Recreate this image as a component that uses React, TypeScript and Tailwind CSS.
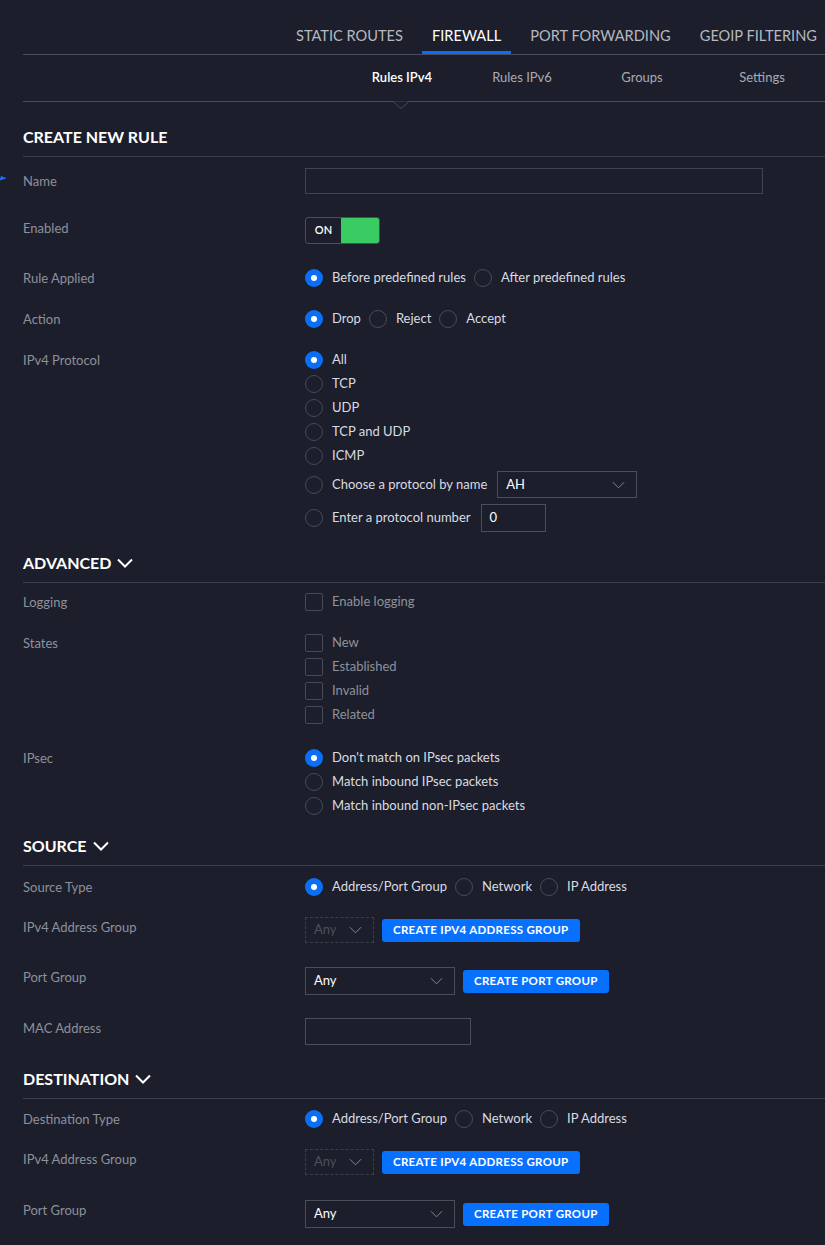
import React from "react";

const font = { fontFamily: "Lato, 'Noto Sans', sans-serif" };

function Radio({ on }: { on?: boolean }) {
  return on ? (
    <span className="w-[18px] h-[18px] shrink-0 rounded-full bg-[#0b6ff5] flex items-center justify-center">
      <span className="w-[6px] h-[6px] rounded-full bg-white" />
    </span>
  ) : (
    <span className="w-[18px] h-[18px] shrink-0 rounded-full border border-[#464a56]" />
  );
}

function Check() {
  return <span className="w-[18px] h-[18px] shrink-0 rounded-[2px] border border-[#464a56]" />;
}

function RadioItem({ on, label }: { on?: boolean; label: string }) {
  return (
    <span className="flex items-center h-[18px]">
      <Radio on={on} />
      <span className="ml-[9px] text-[13px] text-[#d9dbe0]">{label}</span>
    </span>
  );
}

function CheckItem({ label }: { label: string }) {
  return (
    <span className="flex items-center h-[18px]">
      <Check />
      <span className="ml-[9px] text-[13px] text-[#8e9199]">{label}</span>
    </span>
  );
}

function Chevron({ className, sw = 1 }: { className: string; sw?: number }) {
  return (
    <svg className={className} viewBox="0 0 16 10" fill="none">
      <path d="M1 1.5l7 7 7-7" stroke="currentColor" strokeWidth={sw} />
    </svg>
  );
}

function Select({ value, w, disabled }: { value: string; w: string; disabled?: boolean }) {
  return (
    <div
      className={
        disabled
          ? `${w} h-[26px] border border-dashed border-[#3b3f4b] flex items-center justify-between pl-[8px] pr-[10px] text-[13px] text-[#4c505b]`
          : `${w} h-[28px] border border-[#4a4e58] flex items-center justify-between pl-[8px] pr-[10px] text-[13px] text-white`
      }
    >
      <span>{value}</span>
      <Chevron className="w-[15px] h-[8px] text-[#9a9da5]" />
    </div>
  );
}

function Btn({ children }: { children: string }) {
  return (
    <button className="h-[23px] px-[11px] rounded-[3px] bg-[#0870ff] text-white text-[11.5px] font-bold tracking-[0.3px]">
      {children}
    </button>
  );
}

function Row({ label, children, lh = "leading-[18px]", className = "" }: { label: string; children: React.ReactNode; lh?: string; className?: string }) {
  return (
    <div className={`flex items-start ${className}`}>
      <div className={`w-[282px] shrink-0 text-[13px] text-[#8e9199] ${lh}`}>{label}</div>
      <div>{children}</div>
    </div>
  );
}

function Heading({ title, chevron, className }: { title: string; chevron?: boolean; className: string }) {
  return (
    <div className={`flex items-center border-b border-[#3c404c] pb-[8px] ${className}`}>
      <span className="text-[16px] leading-[22px] font-bold text-white">{title}</span>
      {chevron && <Chevron className="ml-[6px] w-[16px] h-[10px] text-white" sw={2} />}
    </div>
  );
}

function GroupRows({ last }: { last?: boolean }) {
  return (
    <>
      <Row label="IPv4 Address Group" lh="leading-[21px]" className="mt-[21px]">
        <div className="flex items-center gap-[8px]">
          <Select value="Any" w="w-[69px]" disabled />
          <Btn>CREATE IPV4 ADDRESS GROUP</Btn>
        </div>
      </Row>
      <Row label="Port Group" lh="leading-[21px]" className={last ? "mt-[25px]" : "mt-[24px]"}>
        <div className="flex items-center gap-[8px]">
          <Select value="Any" w="w-[150px]" />
          <Btn>CREATE PORT GROUP</Btn>
        </div>
      </Row>
    </>
  );
}

export default function App() {
  return (
    <div className="min-h-screen bg-[#1c1e2c] relative overflow-hidden" style={font}>
      <span className="absolute left-0 top-[177px] w-0 h-0 border-t-[5px] border-t-transparent border-r-[6px] border-r-[#1a6fff] rotate-[200deg]" />
      <div className="pl-[23px]">
        <div className="h-[55px] border-b border-[#4a4d57] flex items-end justify-end -mr-[2px]">
          {["STATIC ROUTES", "FIREWALL", "PORT FORWARDING", "GEOIP FILTERING"].map((t) => (
            <div
              key={t}
              className={`ml-[9px] px-[10px] pb-[5px] leading-[20px] text-[14.6px] border-b-[3px] ${
                t === "FIREWALL" ? "border-[#0a6cff] text-white" : "border-transparent text-[#b6b8be]"
              }`}
            >
              {t}
            </div>
          ))}
        </div>
        <div className="relative h-[47px] border-b border-[#4a4d57] flex items-center justify-end pr-[3px]">
          {["Rules IPv4", "Rules IPv6", "Groups", "Settings"].map((t, i) => (
            <div key={t} className={`w-[120px] text-center text-[13px] ${i === 0 ? "text-white font-semibold" : "text-[#a9abb2]"}`}>
              {t}
            </div>
          ))}
          <svg className="absolute left-[370px] -bottom-[8px] w-[16px] h-[8px]" viewBox="0 0 16 8">
            <path d="M0 0.5L8 7.5L16 0.5" fill="#1c1e2c" stroke="#4a4d57" strokeWidth="1" />
          </svg>
        </div>

        <Heading title="CREATE NEW RULE" className="pt-[24px]" />

        <Row label="Name" lh="leading-[26px]" className="mt-[11px]">
          <div className="w-[458px] h-[26px] border border-[#3f4450]" />
        </Row>
        <Row label="Enabled" lh="leading-[22px]" className="mt-[23px]">
          <div className="w-[75px] h-[27px] rounded-[3px] border border-[#4a4e58] flex overflow-hidden">
            <span className="w-[35px] flex items-center justify-center text-[11px] font-semibold text-white">ON</span>
            <span className="flex-1 bg-[#3acb62]" />
          </div>
        </Row>
        <Row label="Rule Applied" className="mt-[25px]">
          <div className="flex items-center gap-[8px]">
            <RadioItem on label="Before predefined rules" />
            <RadioItem label="After predefined rules" />
          </div>
        </Row>
        <Row label="Action" className="mt-[23px]">
          <div className="flex items-center gap-[8px]">
            <RadioItem on label="Drop" />
            <RadioItem label="Reject" />
            <RadioItem label="Accept" />
          </div>
        </Row>
        <Row label="IPv4 Protocol" className="mt-[23px]">
          <div className="flex flex-col gap-[6px]">
            <RadioItem on label="All" />
            <RadioItem label="TCP" />
            <RadioItem label="UDP" />
            <RadioItem label="TCP and UDP" />
            <RadioItem label="ICMP" />
            <div className="flex items-center gap-[10px] h-[27px]">
              <RadioItem label="Choose a protocol by name" />
              <div className="w-[140px] h-[27px] border border-[#4a4e58] flex items-center justify-between pl-[8px] pr-[10px] text-[13px] text-white">
                <span>AH</span>
                <Chevron className="w-[15px] h-[8px] text-[#9a9da5]" />
              </div>
            </div>
            <div className="flex items-center gap-[10px] h-[28px]">
              <RadioItem label="Enter a protocol number" />
              <div className="w-[65px] h-[28px] border border-[#4a4e58] flex items-center pl-[8px] text-[13px] text-white">0</div>
            </div>
          </div>
        </Row>

        <Heading title="ADVANCED" chevron className="mt-[20px]" />
        <Row label="Logging" className="mt-[10px]">
          <CheckItem label="Enable logging" />
        </Row>
        <Row label="States" className="mt-[23px]">
          <div className="flex flex-col gap-[6px]">
            <CheckItem label="New" />
            <CheckItem label="Established" />
            <CheckItem label="Invalid" />
            <CheckItem label="Related" />
          </div>
        </Row>
        <Row label="IPsec" className="mt-[25px]">
          <div className="flex flex-col gap-[6px]">
            <RadioItem on label="Don't match on IPsec packets" />
            <RadioItem label="Match inbound IPsec packets" />
            <RadioItem label="Match inbound non-IPsec packets" />
          </div>
        </Row>

        <Heading title="SOURCE" chevron className="mt-[20px]" />
        <Row label="Source Type" className="mt-[12px]">
          <div className="flex items-center gap-[8px]">
            <RadioItem on label="Address/Port Group" />
            <RadioItem label="Network" />
            <RadioItem label="IP Address" />
          </div>
        </Row>
        <GroupRows />
        <Row label="MAC Address" lh="leading-[21px]" className="mt-[23px]">
          <div className="w-[166px] h-[27px] border border-[#4a4e58]" />
        </Row>

        <Heading title="DESTINATION" chevron className="mt-[23px]" />
        <Row label="Destination Type" className="mt-[11px]">
          <div className="flex items-center gap-[8px]">
            <RadioItem on label="Address/Port Group" />
            <RadioItem label="Network" />
            <RadioItem label="IP Address" />
          </div>
        </Row>
        <GroupRows last />
        <div className="h-[40px]" />
      </div>
    </div>
  );
}
